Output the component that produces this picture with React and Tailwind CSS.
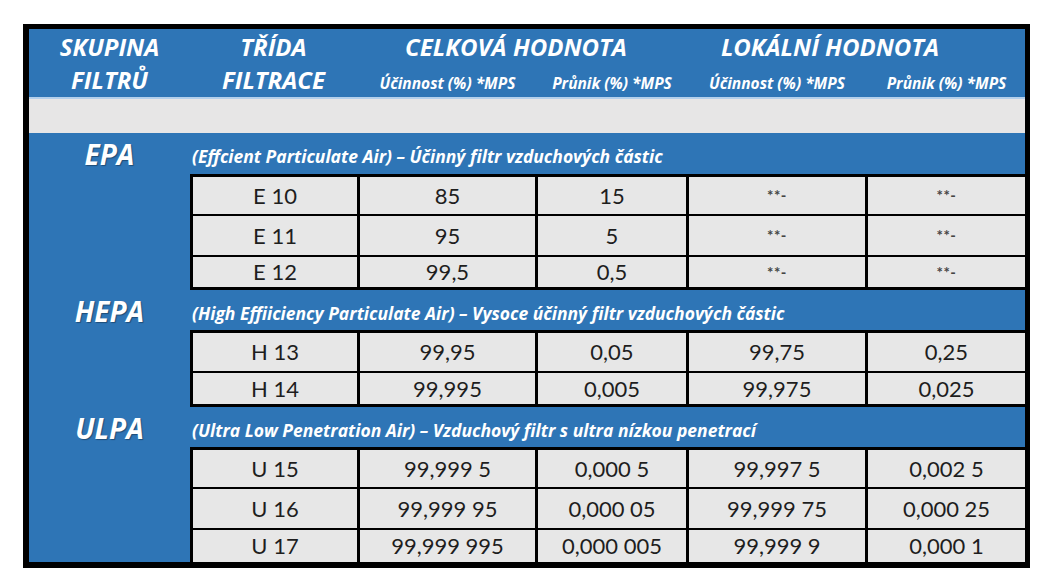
import React from "react";

const font = { fontFamily: "Lato, 'Open Sans', 'Liberation Sans', sans-serif" };
const ital = { fontFamily: "'Open Sans', 'Noto Sans', 'Liberation Sans', sans-serif", fontStyle: "italic" };

const sections = [
  {
    label: "EPA",
    desc: "(Effcient Particulate Air) – Účinný filtr vzduchových částic",
    bandH: "h-[41px]",
    rows: [
      { h: "h-[37px]", c: ["E 10", "85", "15", "**-", "**-"] },
      { h: "h-[39px]", c: ["E 11", "95", "5", "**-", "**-"] },
      { h: "h-[30px]", c: ["E 12", "99,5", "0,5", "**-", "**-"] },
    ],
    last: false,
  },
  {
    label: "HEPA",
    desc: "(High Effiiciency Particulate Air) – Vysoce účinný filtr vzduchových částic",
    bandH: "h-[40px]",
    rows: [
      { h: "h-[38px]", c: ["H 13", "99,95", "0,05", "99,75", "0,25"] },
      { h: "h-[31px]", c: ["H 14", "99,995", "0,005", "99,975", "0,025"] },
    ],
    last: false,
  },
  {
    label: "ULPA",
    desc: "(Ultra Low Penetration Air) – Vzduchový filtr s ultra nízkou penetrací",
    bandH: "h-[40px]",
    rows: [
      { h: "h-[37px]", c: ["U 15", "99,999 5", "0,000 5", "99,997 5", "0,002 5"] },
      { h: "h-[39px]", c: ["U 16", "99,999 95", "0,000 05", "99,999 75", "0,000 25"] },
      { h: "h-[32px]", c: ["U 17", "99,999 995", "0,000 005", "99,999 9", "0,000 1"] },
    ],
    last: true,
  },
];

function Cell({ v }) {
  const small = v === "**-";
  return (
    <div className="bg-[#e7e7e7] flex items-center justify-center text-[#1e1e1e]">
      {small ? (
        <span className="text-[15px] font-bold tracking-[0.5px] text-[#444]">**-</span>
      ) : (
        <span className="text-[22px] leading-none">{v}</span>
      )}
    </div>
  );
}

function Section({ s }) {
  return (
    <div className="flex">
      <div className="w-[161px] shrink-0">
        <div
          className={`${s.bandH} flex items-center justify-center text-white font-bold text-[28px] leading-none pt-[1px] [text-shadow:1px_1px_1px_rgba(0,0,0,0.35)]`}
          style={ital}
        >
          {s.label}
        </div>
      </div>
      <div className="flex-1 flex flex-col">
        <div
          className={`${s.bandH} flex items-center pl-[2px] pt-[7px] text-white font-bold text-[17.5px] leading-none whitespace-nowrap`}
          style={ital}
        >
          {s.desc}
        </div>
        <div className={`bg-black flex flex-col gap-[2px] pl-[3px] pt-[3px] ${s.last ? "pb-0" : "pb-[3px]"}`}>
          {s.rows.map((r, i) => (
            <div key={i} className={`grid grid-cols-[164px_175px_148px_176px_1fr] gap-x-[3px] ${r.h}`}>
              {r.c.map((v, j) => (
                <Cell key={j} v={v} />
              ))}
            </div>
          ))}
        </div>
      </div>
    </div>
  );
}

export default function App() {
  return (
    <div className="w-[1054px] h-[585px] bg-white pt-[24px] pl-[23px]" style={font}>
      <div className="w-[1007px] border-t-[5px] border-l-[6px] border-r-[5px] border-b-[6px] border-black bg-[#2e75b6]">
        {/* Header */}
        <div className="h-[68px] text-white font-bold" style={ital}>
          <div className="flex h-[34px] items-end text-[24px] leading-none pb-[4px]">
            <div className="w-[161px] text-center">SKUPINA</div>
            <div className="w-[167px] text-center">TŘÍDA</div>
            <div className="w-[318px] text-center">CELKOVÁ HODNOTA</div>
            <div className="w-[310px] text-center">LOKÁLNÍ HODNOTA</div>
          </div>
          <div className="flex h-[34px] items-end pb-[5px]">
            <div className="w-[161px] text-center text-[24px] leading-none">FILTRŮ</div>
            <div className="w-[167px] text-center text-[24px] leading-none">FILTRACE</div>
            <div className="w-[3px]" />
            <div className="w-[175px] text-center text-[15.5px] leading-none pb-[1px]">Účinnost (%) *MPS</div>
            <div className="w-[3px]" />
            <div className="w-[148px] text-center text-[15.5px] leading-none pb-[1px]">Průnik (%) *MPS</div>
            <div className="w-[3px]" />
            <div className="w-[176px] text-center text-[15.5px] leading-none pb-[1px]">Účinnost (%) *MPS</div>
            <div className="w-[3px]" />
            <div className="flex-1 text-center text-[15.5px] leading-none pb-[1px]">Průnik (%) *MPS</div>
          </div>
        </div>
        <div className="h-[2px] bg-[#b4d0ec]" />
        <div className="h-[34px] bg-[#e7e6e6]" />
        {sections.map((s) => (
          <Section key={s.label} s={s} />
        ))}
      </div>
    </div>
  );
}
